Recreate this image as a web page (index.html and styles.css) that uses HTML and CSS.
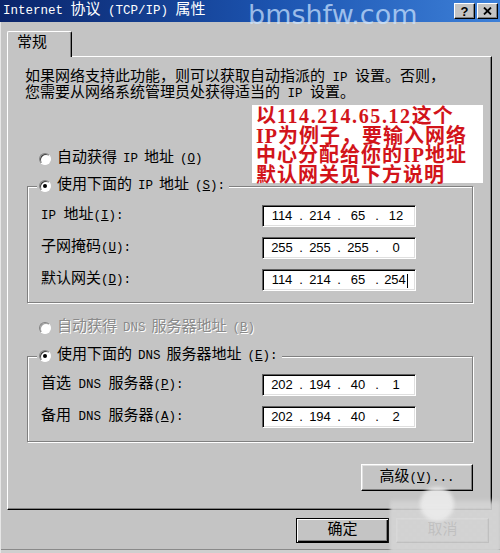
FILE: index.html
```html
<!DOCTYPE html>
<html lang="zh-CN">
<head>
    <meta charset="UTF-8">
    <meta name="viewport" content="width=device-width, initial-scale=1.0">
    <title>Internet 协议 (TCP/IP) 属性</title>
    <link rel="stylesheet" href="styles.css">
</head>
<body>
    <div class="window">
        <div class="titlebar">
            <span class="title"><span class="en">Internet </span>协议<span class="en"> (TCP/IP) </span>属性</span>
            <span class="site">bmshfw.com</span>
            <div class="caption-btns">
                <span class="caption-btn">?</span>
                <span class="caption-btn">
                    <svg width="9" height="8" viewBox="0 0 9 8"><path d="M1 0.5 L8 7.5 M8 0.5 L1 7.5" stroke="#000" stroke-width="1.8"/></svg>
                </span>
            </div>
        </div>

        <div class="frame">
            <div class="tabs">
                <span class="tab">常规</span>
            </div>

            <div class="panel">
                <p class="intro">如果网络支持此功能，则可以获取自动指派的<span class="en"> IP </span>设置。否则，<br>您需要从网络系统管理员处获得适当的<span class="en"> IP </span>设置。</p>

                <!-- 说明框 -->
                <div class="note">以<span class="num">114.214.65.12</span>这个<br>IP为例子，要输入网络<br>中心分配给你的IP地址<br>默认网关见下方说明</div>

                <div class="option first"><span class="radio"></span>自动获得<span class="en"> IP </span>地址<span class="en">(<u>O</u>)</span></div>

                <fieldset class="group ip-group">
                    <legend class="option"><span class="radio checked"></span>使用下面的<span class="en"> IP </span>地址<span class="en">(<u>S</u>):</span></legend>
                    <div class="fields">
                        <span><span class="en">IP </span>地址<span class="en">(<u>I</u>):</span></span>
                        <div class="ip"><span class="octet">114</span><span class="dot">.</span><span class="octet">214</span><span class="dot">.</span><span class="octet">65</span><span class="dot">.</span><span class="octet">12</span></div>

                        <span>子网掩码<span class="en">(<u>U</u>):</span></span>
                        <div class="ip"><span class="octet">255</span><span class="dot">.</span><span class="octet">255</span><span class="dot">.</span><span class="octet">255</span><span class="dot">.</span><span class="octet">0</span></div>

                        <span>默认网关<span class="en">(<u>D</u>):</span></span>
                        <div class="ip"><span class="octet">114</span><span class="dot">.</span><span class="octet">214</span><span class="dot">.</span><span class="octet">65</span><span class="dot">.</span><span class="octet">254<span class="caret"></span></span></div>
                    </div>
                </fieldset>

                <div class="option disabled"><span class="radio"></span>自动获得<span class="en"> DNS </span>服务器地址<span class="en">(<u>B</u>)</span></div>

                <fieldset class="group dns-group">
                    <legend class="option"><span class="radio checked"></span>使用下面的<span class="en"> DNS </span>服务器地址<span class="en">(<u>E</u>):</span></legend>
                    <div class="fields">
                        <span>首选<span class="en"> DNS </span>服务器<span class="en">(<u>P</u>):</span></span>
                        <div class="ip"><span class="octet">202</span><span class="dot">.</span><span class="octet">194</span><span class="dot">.</span><span class="octet">40</span><span class="dot">.</span><span class="octet">1</span></div>

                        <span>备用<span class="en"> DNS </span>服务器<span class="en">(<u>A</u>):</span></span>
                        <div class="ip"><span class="octet">202</span><span class="dot">.</span><span class="octet">194</span><span class="dot">.</span><span class="octet">40</span><span class="dot">.</span><span class="octet">2</span></div>
                    </div>
                </fieldset>

                <div class="advanced">
                    <button class="btn wide">高级<span class="en">(<u>V</u>)...</span></button>
                </div>
            </div>

            <div class="actions">
                <button class="btn default">确定</button>
                <button class="btn">取消</button>
            </div>
        </div>

        <div class="stamp"></div>
    </div>
</body>
</html>
```

FILE: styles.css
```css
body {
    margin: 0;
    background: #c4c4c4;
    font-family: "Liberation Mono", "Noto Sans CJK SC", monospace;
    font-size: 15px;
    line-height: 16px;
    color: #000;
}
.en {
    font-size: 12.5px;
}
.window {
    position: relative;
    width: 500px;
    height: 553px;
    overflow: hidden;
    box-shadow: inset 1px 0 #e6e6e6, inset 0 -3px #cfcfcf, inset 0 -4px #8a8a8a;
}

/* 标题栏 */
.titlebar {
    position: relative;
    display: flex;
    align-items: center;
    height: 22px;
    padding: 0 2px 0 3px;
    background: linear-gradient(to right, #0a246a, #1c54b0 55%, #3d80d8);
    color: #fff;
}
.title {
    white-space: nowrap;
}
.site {
    position: absolute;
    left: 248px;
    top: -2px;
    font-family: "DejaVu Sans", sans-serif;
    font-size: 27px;
    line-height: 34px;
    color: rgba(205, 228, 255, 0.72);
}
.caption-btns {
    position: relative;
    display: flex;
    gap: 2px;
    margin-left: auto;
}
.caption-btn {
    display: flex;
    align-items: center;
    justify-content: center;
    width: 21px;
    height: 16px;
    box-sizing: border-box;
    background: #c4c4c4;
    border: 1px solid;
    border-color: #fff #000 #000 #fff;
    box-shadow: inset -1px -1px #808080;
    color: #000;
    font: bold 13px "Liberation Sans", sans-serif;
}

/* 选项卡 */
.frame {
    padding: 0 8px 0 7px;
}
.tabs {
    position: relative;
    z-index: 1;
    display: flex;
    padding-top: 9px;
}
.tab {
    width: 65px;
    height: 26px;
    box-sizing: border-box;
    padding: 4px 0 0 9px;
    margin-bottom: -1px;
    background: #c4c4c4;
    border: 1px solid #fff;
    border-bottom: 0;
    border-right-color: #000;
    border-radius: 2px 2px 0 0;
    box-shadow: inset -1px 0 #808080;
}
.panel {
    position: relative;
    padding: 13px 18px 18px 17px;
    border: 1px solid #fff;
    border-right-color: #000;
    border-bottom-color: #000;
    box-shadow: inset -1px -1px #808080;
}
.intro {
    margin: 0;
    line-height: 15px;
}
.note {
    position: absolute;
    left: 244px;
    top: 48px;
    width: 231px;
    height: 78px;
    box-sizing: border-box;
    padding: 2px 0 0 4px;
    background: #fff;
    color: #d2141a;
    font: bold 20px/19.5px "Liberation Serif", "Noto Sans CJK SC", serif;
    letter-spacing: 1px;
    white-space: nowrap;
}
.note .num {
    letter-spacing: 1.6px;
}

/* 单选按钮 */
.option {
    display: flex;
    align-items: center;
    gap: 6px;
    height: 16px;
    white-space: nowrap;
}
.option.first {
    margin: 49px 0 0 14px;
}
.option.disabled {
    margin: 17px 0 0 14px;
    color: #8a8a8a;
    text-shadow: 1px 1px #fff;
}
.radio {
    display: flex;
    align-items: center;
    justify-content: center;
    width: 12px;
    height: 12px;
    box-sizing: border-box;
    border-radius: 50%;
    border: 1px solid;
    border-color: #808080 #fff #fff #808080;
    background: #fff;
    box-shadow: inset 1px 1px #404040;
}
.radio.checked::after {
    content: "";
    width: 4px;
    height: 4px;
    border-radius: 50%;
    background: #000;
}
.disabled .radio {
    box-shadow: inset 1px 1px #a0a0a0;
}

/* 分组框 */
.group {
    min-width: 0;
    margin: 11px 0 0 2px;
    padding: 11px 13px 11px 13px;
    border: 1px solid #808080;
    box-shadow: inset 1px 1px #fff, 1px 1px #fff;
}
.dns-group {
    margin-top: 12px;
    padding: 10px 13px 13px 13px;
}
.group legend {
    margin-left: -4px;
    padding: 0 4px 0 2px;
    background: #c4c4c4;
}
.fields {
    display: grid;
    grid-template-columns: 221px 154px;
    row-gap: 10px;
    align-items: center;
    white-space: nowrap;
}
.ip {
    display: flex;
    align-items: center;
    height: 22px;
    box-sizing: border-box;
    padding-left: 3px;
    background: #fff;
    border: 1px solid;
    border-color: #606060 #fff #fff #606060;
    box-shadow: inset 1px 1px #000, inset -1px -1px #dfdfdf;
    font-family: "Liberation Sans", sans-serif;
    font-size: 13px;
}
.octet {
    width: 32px;
    text-align: center;
}
.dot {
    width: 6px;
    text-align: center;
}
.caret {
    display: inline-block;
    width: 1px;
    height: 14px;
    margin-left: 1px;
    vertical-align: middle;
    background: #000;
}

/* 按钮 */
.advanced {
    display: flex;
    justify-content: flex-end;
    margin-top: 22px;
}
.btn {
    width: 93px;
    height: 25px;
    box-sizing: border-box;
    padding: 0;
    background: #c4c4c4;
    border: 1px solid;
    border-color: #fff #000 #000 #fff;
    box-shadow: inset -1px -1px #808080, inset 1px 1px #dfdfdf;
    font: inherit;
    color: #000;
}
.btn.wide {
    width: 112px;
    height: 27px;
}
.btn.default {
    border-color: #000;
    box-shadow: inset 1px 1px #fff, inset -1px -1px #000, inset -2px -2px #808080;
}
.actions {
    display: flex;
    justify-content: flex-end;
    gap: 7px;
    margin-top: 8px;
    padding-right: 3px;
}

/* 右下角水印 */
.stamp {
    position: absolute;
    left: 390px;
    top: 484px;
    width: 110px;
    height: 69px;
    background:
        radial-gradient(circle at 47px 20px, rgba(236, 236, 236, 0.85) 0 15px, rgba(236, 236, 236, 0) 19px),
        linear-gradient(to bottom, rgba(212, 212, 212, 0) 0 14px, rgba(212, 212, 212, 0.9) 20px);
    filter: blur(1.5px);
}
```
